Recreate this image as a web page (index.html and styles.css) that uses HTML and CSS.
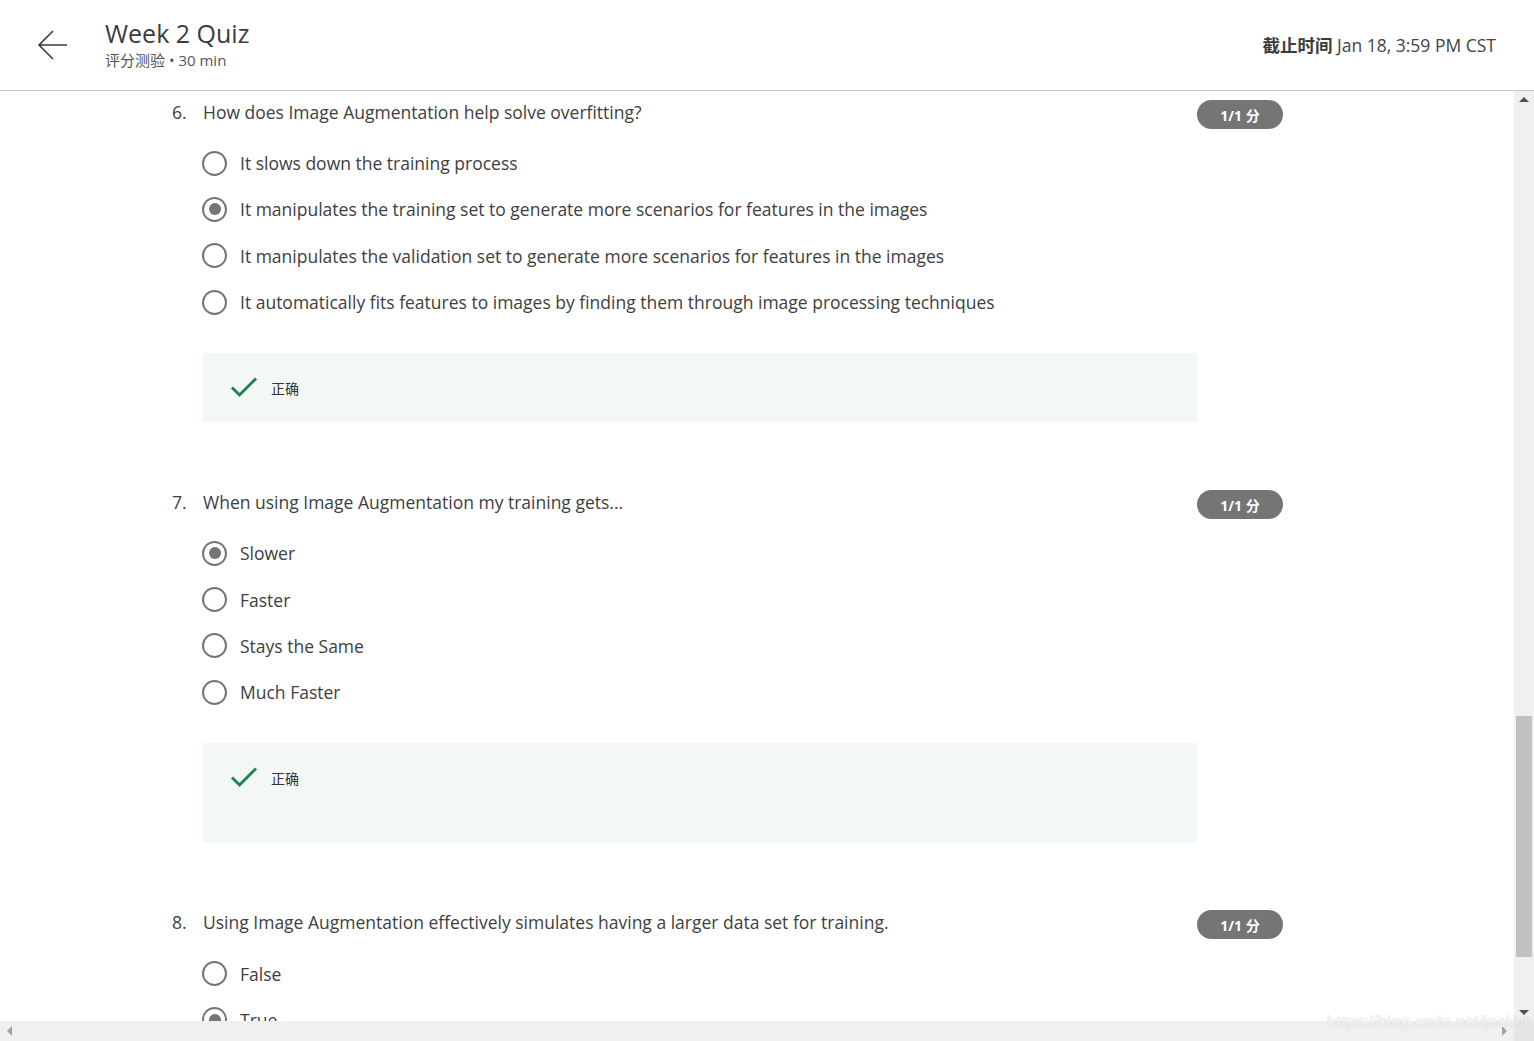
FILE: index.html
```html
<!DOCTYPE html>
<html lang="zh">
<head>
<meta charset="utf-8">
<title>Week 2 Quiz</title>
<link rel="stylesheet" href="styles.css">
</head>
<body>
<div class="app">
  <header class="topbar">
    <div class="topbar-left">
      <button class="back" aria-label="back">
        <svg width="32" height="32" viewBox="0 0 32 32"><path d="M30 16H2M16 2L2 16L16 30" fill="none" stroke="#3c3c3c" stroke-width="1.6"/></svg>
      </button>
      <div class="title-block">
        <div class="title">Week 2 Quiz</div>
        <div class="subtitle">评分测验 • 30 min</div>
      </div>
    </div>
    <div class="deadline"><b>截止时间</b> Jan 18, 3:59 PM CST</div>
  </header>

  <div class="viewport">
    <main class="content">
      <section class="question">
        <div class="qnum">6.</div>
        <div class="qbody">
          <div class="qtext">How does Image Augmentation help solve overfitting?</div>
          <ul class="options">
            <li class="option"><span class="radio"></span><span>It slows down the training process</span></li>
            <li class="option"><span class="radio checked"></span><span>It manipulates the training set to generate more scenarios for features in the images</span></li>
            <li class="option"><span class="radio"></span><span>It manipulates the validation set to generate more scenarios for features in the images</span></li>
            <li class="option"><span class="radio"></span><span>It automatically fits features to images by finding them through image processing techniques</span></li>
          </ul>
          <div class="feedback">
            <div class="feedback-head">
              <svg class="check" width="28" height="22" viewBox="0 0 28 22"><path d="M2 11.5L9.5 19L26 2.5" fill="none" stroke="#1f8354" stroke-width="3"/></svg>
              <span>正确</span>
            </div>
          </div>
        </div>
        <div class="badge">1/1 分</div>
      </section>

      <section class="question">
        <div class="qnum">7.</div>
        <div class="qbody">
          <div class="qtext">When using Image Augmentation my training gets...</div>
          <ul class="options">
            <li class="option"><span class="radio checked"></span><span>Slower</span></li>
            <li class="option"><span class="radio"></span><span>Faster</span></li>
            <li class="option"><span class="radio"></span><span>Stays the Same</span></li>
            <li class="option"><span class="radio"></span><span>Much Faster</span></li>
          </ul>
          <div class="feedback">
            <div class="feedback-head">
              <svg class="check" width="28" height="22" viewBox="0 0 28 22"><path d="M2 11.5L9.5 19L26 2.5" fill="none" stroke="#1f8354" stroke-width="3"/></svg>
              <span>正确</span>
            </div>
            <div class="feedback-extra"></div>
          </div>
        </div>
        <div class="badge">1/1 分</div>
      </section>

      <section class="question">
        <div class="qnum">8.</div>
        <div class="qbody">
          <div class="qtext">Using Image Augmentation effectively simulates having a larger data set for training.</div>
          <ul class="options">
            <li class="option"><span class="radio"></span><span>False</span></li>
            <li class="option"><span class="radio checked"></span><span>True</span></li>
          </ul>
        </div>
        <div class="badge">1/1 分</div>
      </section>
    </main>
    <div class="vscroll">
      <span class="arrow arrow-up"></span>
      <div class="vtrack"><div class="vthumb"></div></div>
      <span class="arrow arrow-down"></span>
    </div>
  </div>

  <div class="hbar">
    <div class="hscroll">
      <span class="arrow arrow-left"></span>
      <span class="arrow arrow-right"></span>
    </div>
    <div class="corner"></div>
  </div>

  <div class="watermark">https://blog.csdn.net/jackhh1</div>
</div>
</body>
</html>
```

FILE: styles.css
```css
* { box-sizing: border-box; }
html, body { margin: 0; padding: 0; }
body {
  font-family: "Open Sans", "Noto Sans CJK SC", sans-serif;
  color: #404040;
  background: #fff;
  overflow: hidden;
}
.app {
  position: relative;
  width: 1534px;
  height: 1041px;
  display: flex;
  flex-direction: column;
}

/* header */
.topbar {
  height: 91px;
  flex: none;
  border-bottom: 1px solid #c8c8c8;
  display: flex;
  align-items: center;
  justify-content: space-between;
  padding: 0 38px 0 37px;
}
.topbar-left { display: flex; align-items: center; }
.back {
  border: 0;
  background: none;
  padding: 0;
  width: 32px;
  height: 32px;
  margin-right: 36px;
  display: flex;
}
.title-block { display: flex; flex-direction: column; margin-top: -2px; }
.title {
  font-size: 25px;
  line-height: 30px;
  color: #3c3c3c;
}
.subtitle {
  font-size: 15px;
  line-height: 20px;
  color: #555;
  margin-top: 2px;
}
.deadline {
  font-size: 17.5px;
  color: #444;
  margin-top: -2px;
}
.deadline b { font-weight: 700; color: #3c3c3c; }

/* viewport */
.viewport {
  height: 930px;
  flex: none;
  display: flex;
  overflow: hidden;
}
.content {
  flex: 1;
  overflow: hidden;
  padding: 8px 0 0 172px;
}
.question {
  width: 1111px;
  display: flex;
  align-items: flex-start;
  margin-bottom: 67px;
}
.qnum {
  width: 31px;
  flex: none;
  font-size: 17.5px;
  line-height: 26px;
}
.qbody { flex: 1; }
.qtext {
  font-size: 17.5px;
  line-height: 26px;
}
.badge {
  flex: none;
  width: 86px;
  height: 29px;
  margin-top: 1px;
  border-radius: 14.5px;
  background: #757575;
  color: #fff;
  font-size: 14px;
  font-weight: 700;
  display: flex;
  align-items: center;
  justify-content: center;
}
.options {
  list-style: none;
  margin: 15px 0 0;
  padding: 0;
}
.option {
  height: 46.3px;
  display: flex;
  align-items: center;
  font-size: 17.5px;
}
.radio {
  width: 25px;
  height: 25px;
  border: 2.5px solid #757575;
  border-radius: 50%;
  margin-left: -1px;
  margin-right: 13px;
  flex: none;
  display: flex;
  align-items: center;
  justify-content: center;
}
.radio.checked::after {
  content: "";
  width: 12px;
  height: 12px;
  border-radius: 50%;
  background: #757575;
}

/* feedback */
.feedback {
  margin-top: 28px;
  background: #f3f8f6;
  padding: 23px 0 23px 27px;
}
.feedback-head {
  display: flex;
  align-items: center;
  height: 23px;
  font-size: 14px;
  color: #333;
}
.check { margin-right: 13px; margin-top: -1px; }
.feedback-extra { height: 30px; }

/* scrollbars */
.vscroll {
  width: 20px;
  flex: none;
  background: #f0f0f0;
  display: flex;
  flex-direction: column;
}
.vtrack { flex: 1; }
.vthumb {
  margin: 608px 2px 0;
  height: 241px;
  background: #c1c1c1;
}
.arrow {
  flex: none;
  display: flex;
  align-items: center;
  justify-content: center;
}
.arrow-up, .arrow-down { height: 17px; }
.arrow-up::before {
  content: "";
  border-left: 5px solid transparent;
  border-right: 5px solid transparent;
  border-bottom: 5px solid #505050;
}
.arrow-down::before {
  content: "";
  border-left: 5px solid transparent;
  border-right: 5px solid transparent;
  border-top: 5px solid #505050;
}
.hbar {
  height: 20px;
  flex: none;
  display: flex;
}
.hscroll {
  flex: 1;
  background: #f0f0f0;
  display: flex;
  justify-content: space-between;
  padding: 0 7px;
}
.arrow-left::before {
  content: "";
  border-top: 5px solid transparent;
  border-bottom: 5px solid transparent;
  border-right: 5px solid #a3a3a3;
}
.arrow-right::before {
  content: "";
  border-top: 5px solid transparent;
  border-bottom: 5px solid transparent;
  border-left: 5px solid #a3a3a3;
}
.corner { width: 20px; background: #e6e6e6; }

.watermark {
  position: absolute;
  left: 1327px;
  top: 1012px;
  font-family: "Liberation Sans", sans-serif;
  font-size: 17px;
  color: rgba(255, 255, 255, 0.85);
  text-shadow: 0 0 1px rgba(0, 0, 0, 0.25);
  white-space: nowrap;
}
```
